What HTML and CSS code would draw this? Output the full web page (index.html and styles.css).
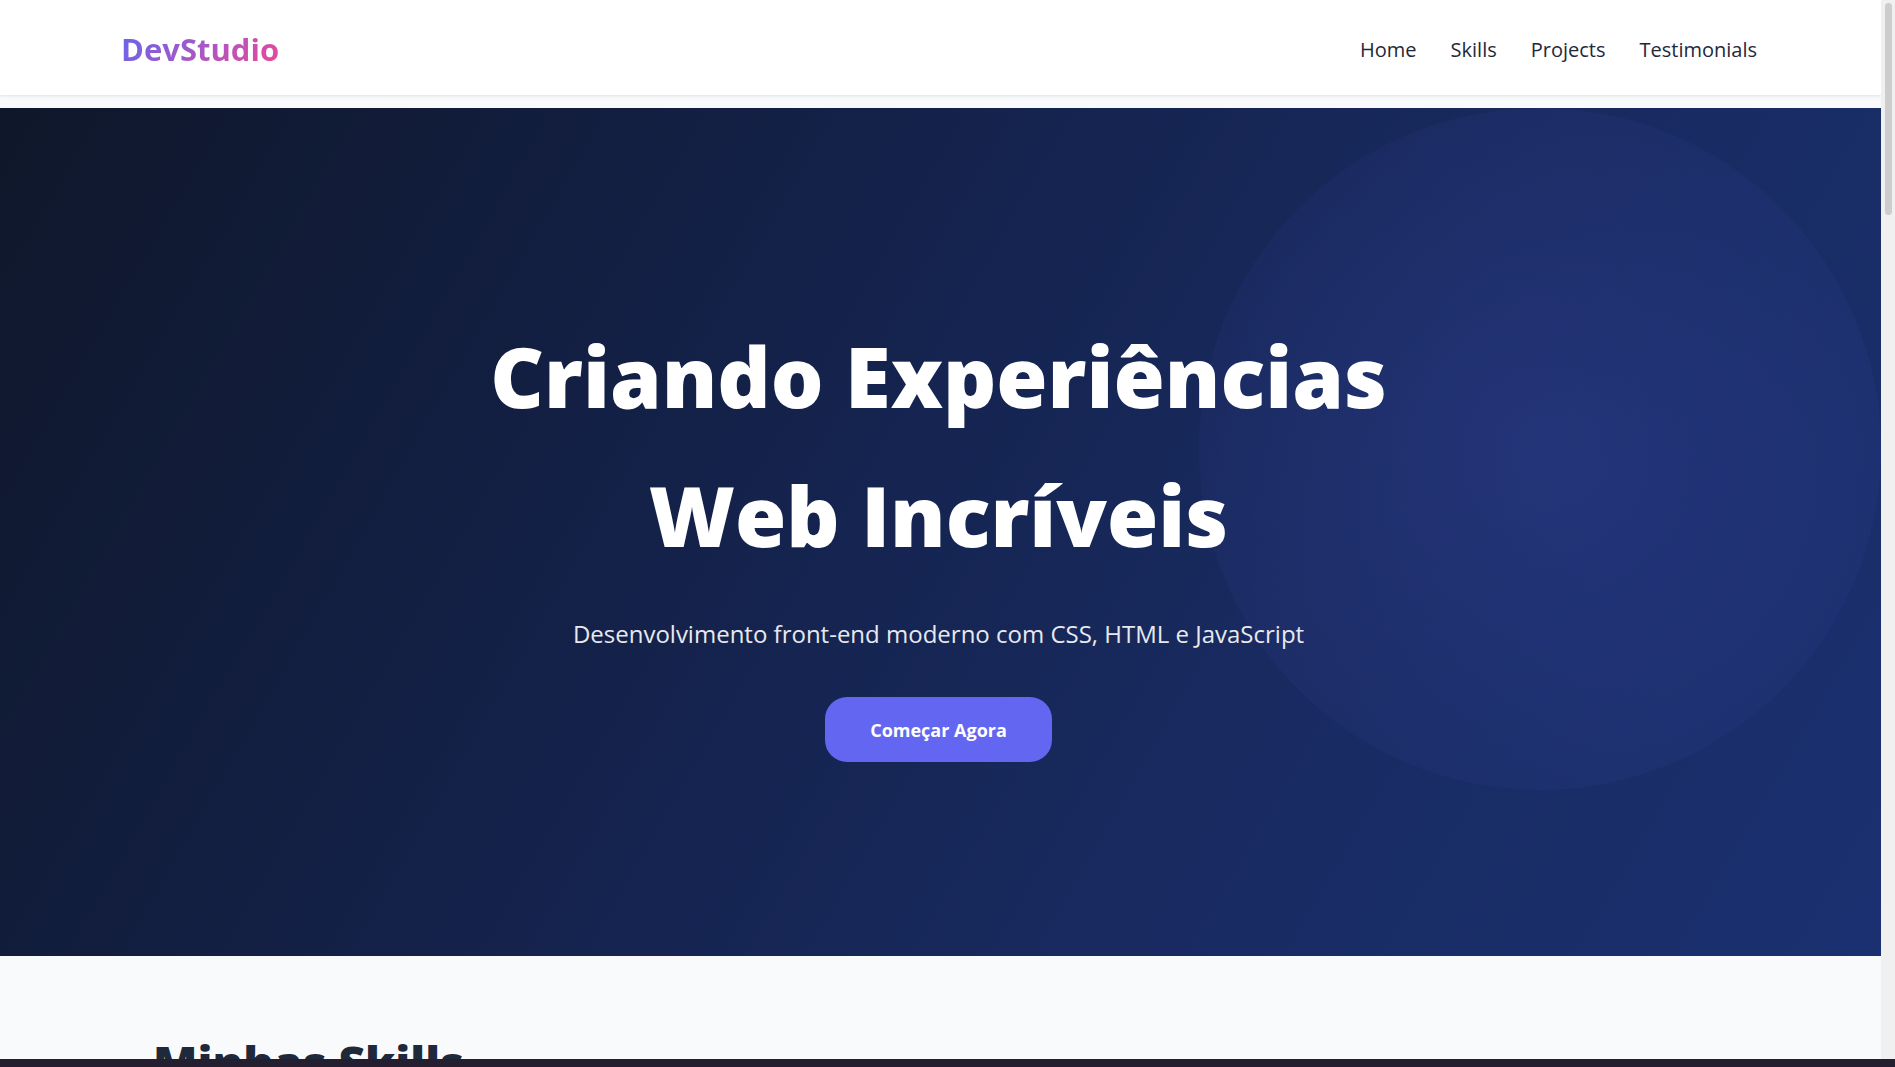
FILE: index.html
```html
<!DOCTYPE html>
<html lang="pt-BR">
<head>
<meta charset="utf-8">
<meta name="viewport" content="width=device-width, initial-scale=1">
<title>DevStudio</title>
<link rel="stylesheet" href="styles.css">
</head>
<body>
<div class="window">
  <div class="page">
    <header class="header">
      <a class="logo" href="#home">DevStudio</a>
      <nav class="nav">
        <a href="#home">Home</a>
        <a href="#skills">Skills</a>
        <a href="#projects">Projects</a>
        <a href="#testimonials">Testimonials</a>
      </nav>
    </header>
    <main>
      <section class="hero" id="home">
        <h1 class="hero-title">Criando Experiências<br>Web Incríveis</h1>
        <p class="hero-text">Desenvolvimento front-end moderno com CSS, HTML e JavaScript</p>
        <button class="cta" type="button">Começar Agora</button>
      </section>
      <section class="skills" id="skills">
        <h2 class="section-title">Minhas Skills</h2>
      </section>
    </main>
  </div>
  <div class="scrollbar"><div class="scrollbar-thumb"></div></div>
  <div class="taskbar"></div>
</div>
</body>
</html>
```
FILE: styles.css
```css
* {
  box-sizing: border-box;
  margin: 0;
}

body {
  font-family: "Open Sans", "Noto Sans", sans-serif;
  color: #1e293b;
  background: #f9fafc;
}

.window {
  display: grid;
  grid-template-columns: 1fr 14px;
  grid-template-rows: minmax(0, 1fr) 8px;
  height: 100vh;
}

.page {
  overflow: hidden;
}

.header {
  display: flex;
  align-items: center;
  justify-content: space-between;
  height: 95px;
  margin-bottom: 13px;
  padding: 3px 124px 0 121px;
  background: #ffffff;
  box-shadow: 0 1px 3px rgba(0, 0, 0, 0.1);
}

.logo {
  font-size: 31px;
  font-weight: 700;
  color: transparent;
  text-decoration: none;
  background: linear-gradient(135deg, #6366f1, #ec4899);
  background-clip: text;
  -webkit-background-clip: text;
}

.nav {
  display: flex;
  gap: 34px;
}

.nav a {
  font-size: 20px;
  color: #1e293b;
  text-decoration: none;
}

.hero {
  position: relative;
  display: flex;
  flex-direction: column;
  align-items: center;
  overflow: hidden;
  height: 848px;
  padding: 198px 36px 0 32px;
  text-align: center;
  color: #ffffff;
  background: linear-gradient(120deg, #0f172a 0%, #14224b 40%, #182a60 67%, #1a3070 100%);
}

/* Soft glow behind the hero text */
.hero::before {
  content: "";
  position: absolute;
  top: 0;
  right: 0;
  width: 682px;
  height: 682px;
  border-radius: 50%;
  background: radial-gradient(circle, rgba(99, 102, 241, 0.15), rgba(99, 102, 241, 0.05) 71%);
}

.hero > * {
  position: relative;
}

.hero-title {
  font-size: 83px;
  font-weight: 800;
  line-height: 139px;
}

.hero-text {
  margin-top: 30px;
  font-size: 24px;
  line-height: 40px;
  color: #e7e9ee;
}

.cta {
  height: 65px;
  margin-top: 43px;
  padding: 0 45px;
  font: 700 18px "Open Sans", "Noto Sans", sans-serif;
  color: #ffffff;
  background: #6366f1;
  border: 0;
  border-radius: 22px;
}

.skills {
  padding: 68px 153px;
}

.section-title {
  font-size: 46px;
  font-weight: 800;
  line-height: 76px;
}

.scrollbar {
  padding: 3px 3px 3px 4px;
  background: #f0f0f0;
}

.scrollbar-thumb {
  height: 212px;
  border-radius: 4px;
  background: #cdcdcd;
}

.taskbar {
  grid-column: 1 / -1;
  background: #231f30;
}
```
